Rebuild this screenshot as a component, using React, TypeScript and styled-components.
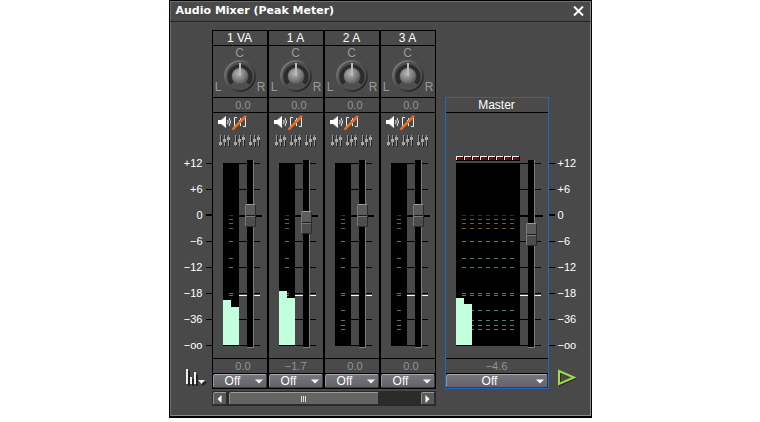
import React from 'react';
import styled, { createGlobalStyle } from 'styled-components';

const GlobalStyle = createGlobalStyle`
  *, *::before, *::after { box-sizing: border-box; }
  body {
    margin: 0;
    background: #fff;
    font-family: 'Liberation Sans', Arial, sans-serif;
    font-size: 12px;
    line-height: 14px;
    color: #fff;
  }
  button, select, input { font: inherit; color: inherit; margin: 0; padding: 0; border: 0; }
  svg { display: block; }
`;

const Page = styled.div`
  display: flex;
  justify-content: center;
`;

const MixerWindow = styled.main`
  display: flex;
  flex-direction: column;
  max-width: 100%;
  background: #494949;
  border: 1px solid #000;
  border-bottom-width: 2px;
  box-shadow: inset 1px 1px 0 #6e6e6e, inset -1px -1px 0 #8a8a8a;
`;

const TitleBar = styled.header`
  display: flex;
  align-items: center;
  justify-content: space-between;
  height: 21px;
  padding: 0 7px 0 6px;
  border-bottom: 1px solid #262626;
`;

const Title = styled.h1`
  margin: 0;
  font: bold 11px/16px 'DejaVu Sans', sans-serif;
`;

const IconButton = styled.button`
  display: block;
  background: none;
  cursor: pointer;
`;

const Console = styled.div`
  display: grid;
  grid-template-columns: 42px auto 104px minmax(42px, 1fr);
  align-items: end;
  padding: 8px 0 10px;
`;

const ScaleColumn = styled.div`
  display: flex;
  flex-direction: column;
`;

const ScaleRow = styled.div<{ $side: 'left' | 'right'; $strong: boolean }>`
  display: flex;
  flex-direction: ${p => (p.$side === 'left' ? 'row' : 'row-reverse')};
  justify-content: flex-end;
  align-items: center;
  gap: 3px;
  height: 26px;
  font-size: 11px;
  &::after {
    content: '';
    width: 6px;
    height: ${p => (p.$strong ? 2 : 1)}px;
    background: #000;
  }
`;

const ScaleFoot = styled.div<{ $side: 'left' | 'right' }>`
  height: 31px;
  padding: ${p => (p.$side === 'left' ? '10px 0 0 15px' : '11px 0 0 8px')};
`;

const Strips = styled.section`
  display: grid;
  grid-template-columns: repeat(4, 54px);
  gap: 2px;
  padding: 1px;
  margin-right: 9px;
  background: #000;
`;

const Strip = styled.article`
  display: flex;
  flex-direction: column;
  gap: 1px;
  background: #000;
`;

const MasterStrip = styled(Strip)`
  border: 1px solid #1f66c8;
`;

const Name = styled.h2`
  margin: 0;
  height: 14px;
  font-size: 12px;
  font-weight: 400;
  line-height: 14px;
  text-align: center;
  background: #4a4a4a;
`;

const Value = styled.output<{ $centered?: boolean }>`
  height: 14px;
  font-size: 11px;
  padding-right: ${p => (p.$centered ? 0 : 16)}px;
  text-align: ${p => (p.$centered ? 'center' : 'right')};
  color: #949494;
  background: #4a4a4a;
`;

const PanArea = styled.div`
  display: grid;
  grid-template-columns: 1fr 32px 1fr;
  grid-template-rows: 14px 34px;
  justify-items: center;
  height: 51px;
  color: #999;
  background: #4a4a4a;
`;

const PanCenter = styled.span`
  grid-column: 1 / -1;
`;

const PanSide = styled.span`
  align-self: end;
`;

const Body = styled.div`
  display: flex;
  flex-direction: column;
  justify-content: flex-end;
  height: 245px;
  background: #494949;
`;

const ToggleRow = styled.div`
  display: flex;
  align-items: flex-start;
  gap: 1px;
  height: 20px;
  padding: 2px 0 0 5px;
`;

const FilterRow = styled.div`
  display: flex;
  align-items: flex-start;
  gap: 4px;
  height: 17px;
  padding: 2px 0 0 6px;
`;

const FaderArea = styled.div`
  display: grid;
  > * { grid-area: 1 / 1; }
`;

const Fader = styled.input<{ $meter: number }>`
  appearance: none;
  writing-mode: vertical-lr;
  direction: rtl;
  width: 11px;
  height: 205px;
  margin: 2px 0 0 ${p => p.$meter + 16}px;
  background: transparent;
  &::-webkit-slider-thumb {
    appearance: none;
    width: 11px;
    height: 23px;
    border: 1px solid #2a2a2a;
    border-top-color: #999;
    border-left-color: #7a7a7a;
    border-radius: 2px;
    background: linear-gradient(#5c5c5c 0 10px, #1c1c1c 10px 11px, #777 11px 12px, #4c4c4c 12px);
  }
`;

const ModeBox = styled.div`
  display: grid;
  height: 14px;
  > * { grid-area: 1 / 1; }
  > svg { justify-self: end; align-self: center; margin-right: 4px; pointer-events: none; }
`;

const ModeSelect = styled.select`
  appearance: none;
  width: 100%;
  height: 14px;
  padding-right: 14px;
  line-height: 12px;
  text-align: center;
  text-align-last: center;
  border: 1px solid #3c3c40;
  border-top-color: #aaa8ae;
  border-left-color: #96949a;
  border-radius: 2px;
  background: linear-gradient(#77757c, #65636a);
`;

const ScrollBar = styled.div`
  grid-column: 2;
  display: grid;
  grid-template-columns: 14px 1fr 14px;
  gap: 2px;
  height: 15px;
  padding: 1px;
  margin: 2px 9px 0 0;
  background: #2b2b2b;
`;

const ScrollButton = styled.button`
  display: grid;
  place-items: center;
  border: 1px solid #2c2c2c;
  border-top-color: #9a9a9a;
  border-left-color: #8c8c8c;
  border-radius: 2px;
  background: #5a5a5a;
`;

const ScrollThumb = styled(ScrollButton)`
  width: 79%;
  background: #646464;
`;

const DB_LABELS = ['+12', '+6', '0', '−6', '−12', '−18', '−36', '−oo'];
const ROW = 26;
const TOP = 13;

const PEAK_MARKS: [number, string][] = [
  [65, '#741010'], [69, '#7c5828'], [73, '#7c5828'], [78, '#7c5828'], [91, '#7c7c10'],
  [108, '#55786e'], [117, '#55786e'], [143, '#55786e'], [145, '#55786e'],
  [160, '#55786e'], [170, '#55786e'], [175, '#55786e'], [179, '#55786e'],
];

interface Channel {
  name: string;
  gain: string;
  fader: number;
  levels: number[];
}

const CHANNELS: Channel[] = [
  { name: '1 VA', gain: '0.0', fader: 130, levels: [45, 38] },
  { name: '1 A', gain: '−1.7', fader: 123, levels: [54, 47] },
  { name: '2 A', gain: '0.0', fader: 130, levels: [] },
  { name: '3 A', gain: '0.0', fader: 130, levels: [] },
];

function MeterChart({ meter, levels, clips }: { meter: number; levels: number[]; clips?: boolean }) {
  const right = 10 + meter;
  const markCount = Math.max(1, meter / 8 - 1);
  const marks = Array.from({ length: markCount }, (_, i) => 16 + i * 8);
  return (
    <svg width={right + 24} height={208} shapeRendering="crispEdges" aria-hidden="true">
      {clips && Array.from({ length: meter / 8 }, (_, i) => (
        <g key={i}>
          <rect x={10 + i * 8} y={6} width={8} height={5} fill="#000" />
          <rect x={10 + i * 8} y={6} width={7} height={4} fill="#eee" />
          <rect x={11 + i * 8} y={7} width={6} height={3} fill="#780808" />
        </g>
      ))}
      <rect x={10} y={TOP} width={meter} height={183} fill="#000" />
      {DB_LABELS.map((label, i) => (
        <rect key={label} x={right} y={TOP + i * ROW} width={i === 2 ? 23 : 21} height={i === 2 ? 2 : 1} fill="#000" />
      ))}
      <rect x={right} y={145} width={21} height={1} fill="#fff" />
      {marks.map(x => PEAK_MARKS.map(([y, color]) => (
        <rect key={`${x}-${y}`} x={x} y={y} width={4} height={1} fill={color} />
      )))}
      {levels.map((h, i) => (
        <rect key={i} x={10 + i * 8} y={195 - h} width={8} height={h} fill="#c1ffdd" />
      ))}
      <rect x={right + 8} y={10} width={7} height={188} fill="#7c7c7c" />
      <rect x={right + 8} y={10} width={6} height={187} fill="#000" />
    </svg>
  );
}

function PanKnob() {
  return (
    <svg width="34" height="34" viewBox="0 0 34 34" role="img" aria-label="Pan centre">
      <defs>
        <radialGradient id="knobBall" cx="0.4" cy="0.35" r="0.7">
          <stop offset="0" stopColor="#b4b4b4" />
          <stop offset="0.6" stopColor="#7c7c7c" />
          <stop offset="1" stopColor="#505050" />
        </radialGradient>
        <linearGradient id="knobRing" x1="0" y1="0" x2="1" y2="1">
          <stop offset="0" stopColor="#858585" />
          <stop offset="0.5" stopColor="#4c4c4c" />
          <stop offset="1" stopColor="#191919" />
        </linearGradient>
      </defs>
      <circle cx="17" cy="16" r="15" fill="#4f4f4f" stroke="url(#knobRing)" strokeWidth="2" />
      <path d="M9 23.500 A10.500 10.500 0 1 1 25 23.500" fill="none" stroke="#2c2c2c" strokeWidth="4" />
      <circle cx="17" cy="16" r="8" fill="url(#knobBall)" />
      <rect x="16" y="3" width="2" height="13" fill="#bcbcbc" />
    </svg>
  );
}

const SpeakerIcon = () => (
  <svg width="13" height="14" viewBox="0 0 13 14">
    <path d="M0 5h3l5-4v12l-5-4H0z" fill="#fff" />
    <path d="M9.500 5q1.500 2 0 4M11 3q3 4 0 8" fill="none" stroke="#eee" />
  </svg>
);

const PanOffIcon = () => (
  <svg width="16" height="16" viewBox="0 0 16 16">
    <path d="M5 2.500H2.500v9H5M11 2.500h2.500v9H11M8.500 3v8M7 5.500h3" fill="none" stroke="#eee" />
    <path d="M.5 14.500L14 1" stroke="#f26c26" strokeWidth="2.500" />
  </svg>
);

const FilterIcon = () => (
  <svg width="11" height="12" viewBox="0 0 11 12">
    <path d="M2.500 1v11M6.500 1v11M10.500 1v11" stroke="#262626" />
    <path d="M1.500 0v11M5.500 0v11M9.500 0v11" stroke="#999" />
    <path d="M0 7h3v3H0zM4 4h3v3H4zM8 2h3v3H8z" fill="#a8a8a8" />
  </svg>
);

const DownArrow = () => (
  <svg width="8" height="5" viewBox="0 0 8 5"><path d="M0 .5h8L4 4.500z" fill="#fff" /></svg>
);

function Mode({ owner }: { owner: string }) {
  return (
    <ModeBox>
      <ModeSelect aria-label={`${owner} automation`} defaultValue="Off">
        <option>Off</option>
      </ModeSelect>
      <DownArrow />
    </ModeBox>
  );
}

function Scale({ side, children }: { side: 'left' | 'right'; children: React.ReactNode }) {
  return (
    <ScaleColumn>
      {DB_LABELS.map((label, i) => (
        <ScaleRow key={label} $side={side} $strong={i === 2}>{label}</ScaleRow>
      ))}
      <ScaleFoot $side={side}>{children}</ScaleFoot>
    </ScaleColumn>
  );
}

function ChannelStrip({ channel }: { channel: Channel }) {
  return (
    <Strip>
      <Name>{channel.name}</Name>
      <PanArea>
        <PanCenter>C</PanCenter>
        <PanSide>L</PanSide>
        <PanKnob />
        <PanSide>R</PanSide>
      </PanArea>
      <Value>0.0</Value>
      <Body>
        <ToggleRow>
          <IconButton aria-label="Mute"><SpeakerIcon /></IconButton>
          <IconButton aria-label="Solo"><PanOffIcon /></IconButton>
        </ToggleRow>
        <FilterRow>
          {[1, 2, 3].map(n => (
            <IconButton key={n} aria-label={`Filter ${n}`}><FilterIcon /></IconButton>
          ))}
        </FilterRow>
        <FaderArea>
          <MeterChart meter={16} levels={channel.levels} />
          <Fader $meter={16} type="range" min={0} max={182} defaultValue={channel.fader} aria-label={`${channel.name} volume`} />
        </FaderArea>
      </Body>
      <Value>{channel.gain}</Value>
      <Mode owner={channel.name} />
    </Strip>
  );
}

export default function App() {
  return (
    <Page>
      <GlobalStyle />
      <MixerWindow>
        <TitleBar>
          <Title>Audio Mixer (Peak Meter)</Title>
          <IconButton aria-label="Close">
            <svg width="11" height="10" viewBox="0 0 11 10">
              <path d="M1 .5l9 9M10 .5l-9 9" stroke="#fff" strokeWidth="2" />
            </svg>
          </IconButton>
        </TitleBar>
        <Console>
          <Scale side="left">
            <IconButton aria-label="Meter type">
              <svg width="22" height="19" viewBox="0 0 22 19">
                <path d="M3 2v15M7 10v7M11 6v11" stroke="#222" strokeWidth="2" transform="translate(1 1)" />
                <path d="M2 1v15M6 9v7M10 4v12" stroke="#eee" strokeWidth="2" />
                <path d="M14 13h7l-3.500 4z" fill="#222" transform="translate(1 1)" />
                <path d="M13 12h7l-3.500 4z" fill="#eee" />
              </svg>
            </IconButton>
          </Scale>
          <Strips>
            {CHANNELS.map(c => <ChannelStrip key={c.name} channel={c} />)}
          </Strips>
          <MasterStrip>
            <Name>Master</Name>
            <Body>
              <FaderArea>
                <MeterChart meter={64} levels={[47, 41]} clips />
                <Fader $meter={64} type="range" min={0} max={182} defaultValue={111} aria-label="Master volume" />
              </FaderArea>
            </Body>
            <Value $centered>−4.6</Value>
            <Mode owner="Master" />
          </MasterStrip>
          <Scale side="right">
            <IconButton aria-label="Play">
              <svg width="20" height="18" viewBox="0 0 20 18">
                <path d="M3 3l15 6.500-15 6.500z" fill="none" stroke="#2c2c2c" strokeWidth="2" />
                <path d="M2 2l15 6.500-15 6.500z" fill="none" stroke="#a0dc46" strokeWidth="2" />
              </svg>
            </IconButton>
          </Scale>
          <ScrollBar>
            <ScrollButton aria-label="Scroll left">
              <svg width="5" height="8" viewBox="0 0 5 8"><path d="M4.500 0v8L.5 4z" fill="#fff" /></svg>
            </ScrollButton>
            <ScrollThumb aria-label="Scroll position">
              <svg width="6" height="6" viewBox="0 0 6 6"><path d="M.5 0v6M2.500 0v6M4.500 0v6" stroke="#ddd" /></svg>
            </ScrollThumb>
            <ScrollButton aria-label="Scroll right">
              <svg width="5" height="8" viewBox="0 0 5 8"><path d="M.5 0v8l4-4z" fill="#fff" /></svg>
            </ScrollButton>
          </ScrollBar>
        </Console>
      </MixerWindow>
    </Page>
  );
}
